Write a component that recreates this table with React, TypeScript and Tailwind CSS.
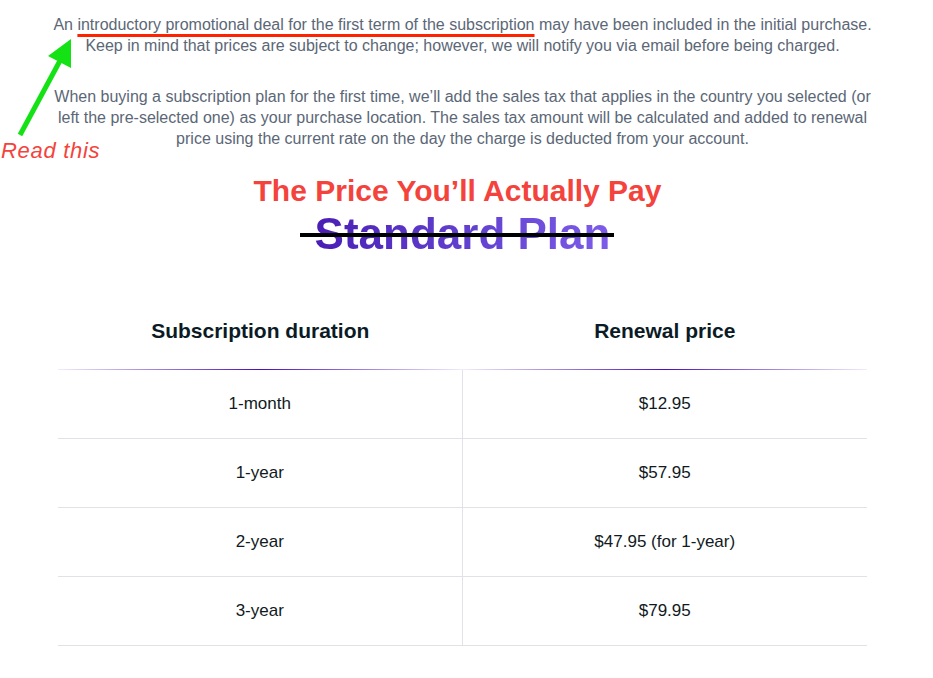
import React from "react";

const rows = [
  ["1-month", "$12.95"],
  ["1-year", "$57.95"],
  ["2-year", "$47.95 (for 1-year)"],
  ["3-year", "$79.95"],
];

const headGrad = "bg-[linear-gradient(to_right,rgba(74,15,191,0.08),#4a0fbf_50%,rgba(74,15,191,0.08))]";

export default function App() {
  return (
    <div className="relative w-[933px] h-[678px] bg-white overflow-hidden font-['Liberation_Sans',Arial,sans-serif]">
      {/* annotations */}
      <svg className="absolute left-0 top-0" width="120" height="150" viewBox="0 0 120 150">
        <line x1="20" y1="135" x2="62" y2="57" stroke="#14e214" strokeWidth="5" />
        <polygon points="71,39 48,56 71,68" fill="#14e214" />
      </svg>
      <div className="absolute left-[1px] top-[139px] text-[22px] leading-[24px] italic tracking-[0.7px] text-[#f4433c]">Read this</div>

      <div className="pl-[44px] pr-[52px] pt-[14px]">
        <p className="text-center text-[16px] leading-[21px] text-[#5b6776] whitespace-nowrap">
          An{" "}
          <span className="underline decoration-[#ff2200] decoration-[3px] underline-offset-[4px] [text-decoration-skip-ink:none]">
            introductory promotional deal for the first term of the subscription
          </span>{" "}
          may have been included in the initial purchase.
          <br />
          Keep in mind that prices are subject to change; however, we will notify you via email before being charged.
        </p>
        <p className="mt-[30px] text-center text-[16px] leading-[21px] text-[#5b6776] whitespace-nowrap">
          When buying a subscription plan for the first time, we’ll add the sales tax that applies in the country you selected (or
          <br />
          left the pre-selected one) as your purchase location. The sales tax amount will be calculated and added to renewal
          <br />
          price using the current rate on the day the charge is deducted from your account.
        </p>

        <h2 className="mt-[24px] pr-[10px] text-center text-[30px] leading-[36px] font-bold text-[#f4433c]">
          The Price You’ll Actually Pay
        </h2>
        <div className="mt-[3px] text-center">
          <span className="relative inline-block text-[44px] leading-[44px] font-bold bg-gradient-to-r from-[#4a1db5] to-[#7c5ce9] bg-clip-text text-transparent">
            Standard Plan
            <span className="absolute left-[-15px] right-[-4px] top-[21px] h-[4px] bg-black" />
          </span>
        </div>

        <div className="mt-[36px] w-[809px] mx-auto">
          <div className="grid grid-cols-2">
            <div className="flex flex-col">
              <div className="h-[77px] flex items-center justify-center text-[21px] font-bold text-[#0b1b26]">Subscription duration</div>
              <div className={`h-px ${headGrad}`} />
            </div>
            <div className="flex flex-col">
              <div className="h-[77px] flex items-center justify-center text-[21px] font-bold text-[#0b1b26]">Renewal price</div>
              <div className={`h-px ${headGrad}`} />
            </div>
          </div>
          {rows.map(([d, p]) => (
            <div key={d} className="grid grid-cols-2 border-b border-[#e1e1e7]">
              <div className="h-[68px] flex items-center justify-center border-r border-[#e1e1e7] text-[17px] text-[#111a22]">{d}</div>
              <div className="h-[68px] flex items-center justify-center text-[17px] text-[#111a22]">{p}</div>
            </div>
          ))}
        </div>
      </div>
    </div>
  );
}
